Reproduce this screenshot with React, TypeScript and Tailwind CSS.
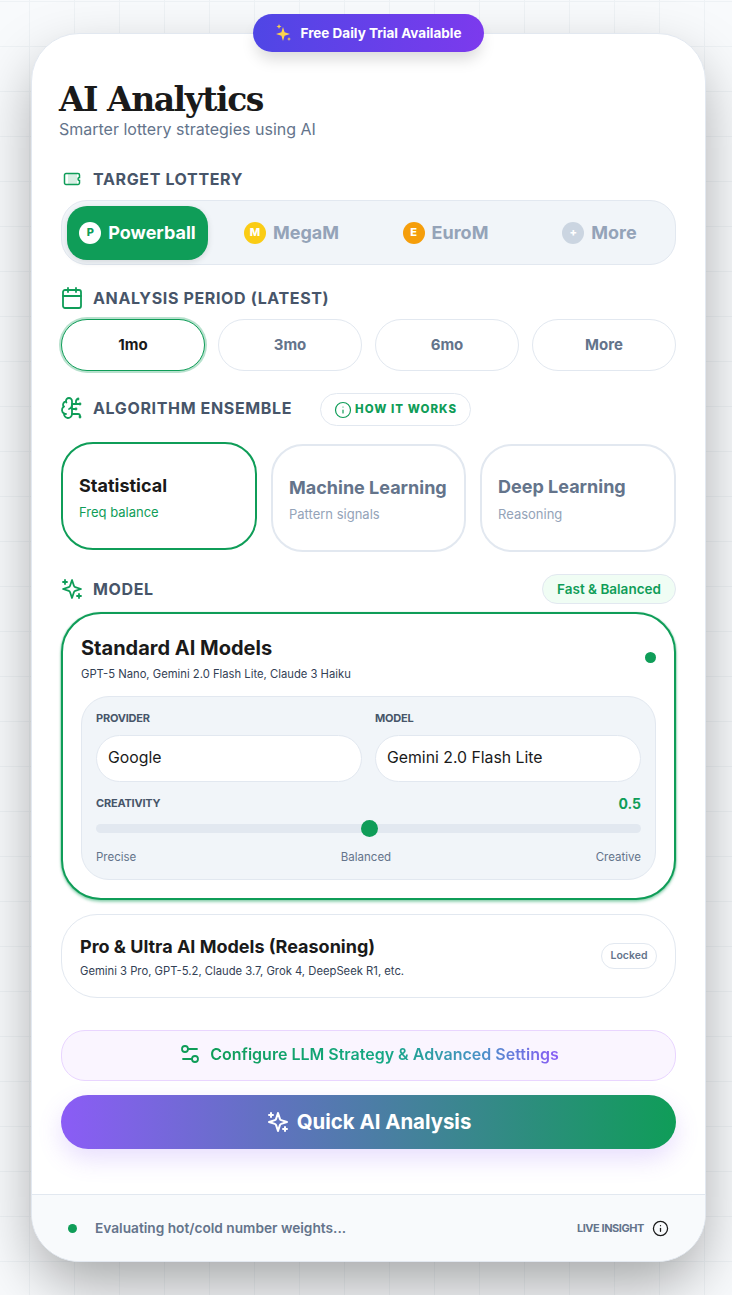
import { BrainCircuit, Calendar, Info, Settings2 } from 'lucide-react';

const LOTTERIES = [
  { label: 'MegaM', short: 'M', color: 'bg-[#facc15]' },
  { label: 'EuroM', short: 'E', color: 'bg-[#f59e0b]' },
  { label: 'More', short: '+', color: 'bg-[#cbd5e1]' },
];

function SectionTitle({ children }: { children: string }) {
  return <span className="text-[16px] font-bold tracking-[0.04em] text-[#475569]">{children}</span>;
}

function TicketIcon() {
  return (
    <svg width="18" height="14" viewBox="0 0 18 14" fill="none" className="text-[#0f9d58]">
      <rect x="5" y="2" width="9" height="10" fill="#0f9d58" fillOpacity="0.16" />
      <path
        d="M3 1.5h12a1.5 1.5 0 0 1 1.5 1.5v2.5a1.5 1.5 0 0 0 0 3V11a1.5 1.5 0 0 1-1.5 1.5H3A1.5 1.5 0 0 1 1.5 11V3A1.5 1.5 0 0 1 3 1.5Z"
        stroke="currentColor"
        strokeWidth="1.5"
      />
    </svg>
  );
}

function SparkleIcon({ className, strokeWidth }: { className?: string; strokeWidth: number }) {
  return (
    <svg width="24" height="24" viewBox="0 0 24 24" fill="none" stroke="currentColor" strokeWidth={strokeWidth} strokeLinecap="round" strokeLinejoin="round" className={className}>
      <path d="m12 3-1.912 5.813a2 2 0 0 1-1.275 1.275L3 12l5.813 1.912a2 2 0 0 1 1.275 1.275L12 21l1.912-5.813a2 2 0 0 1 1.275-1.275L21 12l-5.813-1.912a2 2 0 0 1-1.275-1.275L12 3Z" />
      <path d="M5 3v4" />
      <path d="M19 17v4" />
      <path d="M3 5h4" />
      <path d="M17 19h4" />
    </svg>
  );
}

function TrialStars() {
  return (
    <svg width="16" height="18" viewBox="0 0 16 18" fill="#fcd34d">
      <path d="M7 3 8.6 8.2 14 10l-5.4 1.8L7 17l-1.6-5.2L0 10l5.4-1.8Z" />
      <path d="M3 0l.7 1.8L5.5 2.5l-1.8.7L3 5l-.7-1.8L.5 2.5l1.8-.7Z" />
      <path d="M13 13l.6 1.4 1.4.6-1.4.6L13 17l-.6-1.4-1.4-.6 1.4-.6Z" />
    </svg>
  );
}

export default function App() {
  return (
    <div className="relative h-[1295px] w-full overflow-hidden bg-[#f8fafc] bg-[linear-gradient(to_right,#eef2f5_1px,transparent_1px),linear-gradient(to_bottom,#eef2f5_1px,transparent_1px)] bg-[size:45px_45px] bg-[position:29px_1px] pt-[33px] pl-[31px] font-['Inter',sans-serif]">
      {/* Card */}
      <div className="relative flex h-[1229px] w-[675px] flex-col rounded-[48px] border border-[#e2e8f0] bg-white shadow-[0_25px_60px_-5px_rgba(0,0,0,0.35)]">
        {/* Trial badge */}
        <div className="absolute -top-[20px] left-[221px] flex h-[38px] w-[231px] items-center justify-center gap-[9px] rounded-full bg-[linear-gradient(90deg,#4f46e5,#7c3aed)] text-[13.5px] font-bold text-white shadow-[0_10px_15px_-3px_rgba(0,0,0,0.15)]">
          <TrialStars />
          Free Daily Trial Available
        </div>

        <div className="flex flex-1 flex-col pr-[29px] pl-[29px]">
          {/* Header */}
          <div className="-ml-[2px] pt-[45px]">
            <h1 className="font-['DejaVu_Serif',serif] text-[33px] leading-[42px] font-bold tracking-[-0.045em] text-[#1a1a1a]">
              AI Analytics
            </h1>
            <p className="mt-[-2px] text-[16px] leading-[20px] text-[#64748b]">Smarter lottery strategies using AI</p>
          </div>

          {/* Target lottery */}
          <div className="mt-[30px] flex h-[20px] items-center gap-[12px] pl-[2px]">
            <TicketIcon />
            <SectionTitle>TARGET LOTTERY</SectionTitle>
          </div>
          <div className="mt-[11px] grid h-[65px] grid-cols-4 items-center gap-[13px] rounded-[26px] border border-[#e2e8f0] bg-[#f1f5f9] px-[5px]">
            <div className="flex h-[54px] items-center justify-center gap-[7px] rounded-[20px] bg-[#0f9d58] text-[18px] font-bold text-white shadow-[0_2px_6px_rgba(0,0,0,0.12)]">
              <span className="flex h-[22px] w-[22px] items-center justify-center rounded-full bg-white text-[11px] font-extrabold text-[#0f9d58]">
                P
              </span>
              Powerball
            </div>
            {LOTTERIES.map((l) => (
              <div key={l.label} className="flex items-center justify-center gap-[7px] text-[18px] font-bold text-[#94a3b8]">
                <span className={`flex h-[22px] w-[22px] items-center justify-center rounded-full text-[11px] font-extrabold text-white ${l.color}`}>
                  {l.short}
                </span>
                {l.label}
              </div>
            ))}
          </div>

          {/* Analysis period */}
          <div className="mt-[23px] -ml-[1px] flex h-[20px] items-center gap-[9px]">
            <Calendar size={24} strokeWidth={1.8} className="text-[#0f9d58]" />
            <SectionTitle>ANALYSIS PERIOD (LATEST)</SectionTitle>
          </div>
          <div className="mt-[11px] grid grid-cols-4 gap-[13px]">
            <div className="flex h-[52px] items-center justify-center rounded-[26px] border-[1.5px] border-[#0f9d58] bg-white text-[15px] font-bold text-[#1a1a1a] shadow-[0_0_0_2px_rgba(15,157,88,0.3)]">
              1mo
            </div>
            {['3mo', '6mo', 'More'].map((p) => (
              <div key={p} className="flex h-[52px] items-center justify-center rounded-[26px] border border-[#e2e8f0] bg-white text-[15px] font-bold text-[#64748b]">
                {p}
              </div>
            ))}
          </div>

          {/* Algorithm ensemble */}
          <div className="mt-[22px] flex h-[33px] items-center">
            <div className="mb-[3px] -ml-[1px] flex items-center gap-[9px]">
              <BrainCircuit size={24} strokeWidth={1.8} className="text-[#0f9d58]" />
              <SectionTitle>ALGORITHM ENSEMBLE</SectionTitle>
            </div>
            <div className="ml-[28px] flex h-[33px] w-[151px] items-center justify-center gap-[3px] rounded-full border border-[#e2e8f0] bg-white text-[11.5px] font-extrabold tracking-[0.09em] text-[#0f9d58]">
              <Info size={18} strokeWidth={1.6} />
              HOW IT WORKS
            </div>
          </div>
          <div className="mt-[18px] flex gap-[14px]">
            <div className="-mt-[2px] mb-[2px] h-[108px] w-[196px] rounded-[32px] border-2 border-[#0f9d58] bg-white pt-[29px] pl-[16px]">
              <div className="text-[18px] leading-[26px] font-bold text-[#1a1a1a]">Statistical</div>
              <div className="mt-[1px] text-[13px] leading-[24px] text-[#0f9d58]">Freq balance</div>
            </div>
            <div className="h-[108px] w-[195px] rounded-[32px] border-2 border-[#e2e8f0] bg-white pt-[29px] pl-[16px]">
              <div className="text-[18px] leading-[26px] font-bold text-[#64748b]">Machine Learning</div>
              <div className="mt-[1px] text-[13px] leading-[24px] text-[#94a3b8]">Pattern signals</div>
            </div>
            <div className="h-[108px] w-[196px] rounded-[32px] border-2 border-[#e2e8f0] bg-white pt-[28px] pl-[16px]">
              <div className="text-[18px] leading-[26px] font-bold text-[#64748b]">Deep Learning</div>
              <div className="mt-[2px] text-[13px] leading-[24px] text-[#94a3b8]">Reasoning</div>
            </div>
          </div>

          {/* Model */}
          <div className="mt-[22px] flex h-[30px] items-center">
            <div className="-ml-[1px] flex items-center gap-[9px]">
              <SparkleIcon strokeWidth={1.8} className="text-[#0f9d58]" />
              <SectionTitle>MODEL</SectionTitle>
            </div>
            <div className="ml-auto flex h-[30px] w-[134px] items-center justify-center rounded-full border border-[#e2e8f0] bg-[#f0fdf4] pt-[1px] text-[13.5px] font-semibold text-[#0f9d58]">
              Fast &amp; Balanced
            </div>
          </div>

          <div className="mt-[8px] h-[288px] rounded-[40px] border-2 border-[#0f9d58] bg-white px-[18px] shadow-[0_2px_3px_rgba(15,157,88,0.45),1px_0_1px_rgba(15,157,88,0.2),-1px_0_1px_rgba(15,157,88,0.2)]">
            <div className="relative h-[82px] pt-[20px]">
              <div className="text-[20px] leading-[28px] font-bold text-[#1a1a1a]">Standard AI Models</div>
              <div className="mt-[4px] text-[11.25px] leading-[16px] text-[#334155]">GPT-5 Nano, Gemini 2.0 Flash Lite, Claude 3 Haiku</div>
              <span className="absolute top-[38px] right-0 h-[11px] w-[11px] rounded-full bg-[#0f9d58]" />
            </div>
            <div className="h-[184px] rounded-[28px] border border-[#e2e8f0] bg-[#f1f5f9] px-[14px] pt-[14px]">
              <div className="grid grid-cols-2 gap-[13px]">
                <div>
                  <div className="text-[11px] leading-[14px] font-bold tracking-[-0.02em] text-[#475569]">PROVIDER</div>
                  <div className="mt-[10px] flex h-[47px] items-center rounded-[24px] border border-[#e2e8f0] bg-white pb-[2px] pl-[11px] text-[15.8px] text-[#1a1a1a]">
                    Google
                  </div>
                </div>
                <div>
                  <div className="text-[11px] leading-[14px] font-bold tracking-[-0.02em] text-[#475569]">MODEL</div>
                  <div className="mt-[10px] flex h-[47px] items-center rounded-[24px] border border-[#e2e8f0] bg-white pb-[2px] pl-[11px] text-[15.8px] text-[#1a1a1a]">
                    Gemini 2.0 Flash Lite
                  </div>
                </div>
              </div>
              <div className="mt-[14px] flex items-start justify-between">
                <span className="text-[11px] leading-[14px] font-bold tracking-[-0.02em] text-[#475569]">CREATIVITY</span>
                <span className="text-[14px] leading-[16px] font-bold text-[#0f9d58]">0.5</span>
              </div>
              <div className="relative mt-[12px] h-[9px] rounded-full bg-[#e2e8f0]">
                <span className="absolute top-[-4px] left-[265px] h-[17px] w-[17px] rounded-full bg-[#0f9d58]" />
              </div>
              <div className="mt-[16px] flex justify-between text-[11.5px] leading-[16px] text-[#64748b]">
                <span>Precise</span>
                <span>Balanced</span>
                <span>Creative</span>
              </div>
            </div>
          </div>

          {/* Locked tier */}
          <div className="mt-[14px] flex h-[84px] items-center justify-between rounded-[36px] border border-[#e2e8f0] bg-white pr-[18px] pl-[18px]">
            <div>
              <div className="text-[18px] leading-[26px] font-bold text-[#1a1a1a]">Pro &amp; Ultra AI Models (Reasoning)</div>
              <div className="mt-[3px] text-[11.25px] leading-[16px] text-[#334155]">Gemini 3 Pro, GPT-5.2, Claude 3.7, Grok 4, DeepSeek R1, etc.</div>
            </div>
            <div className="flex h-[26px] w-[56px] items-center justify-center rounded-full border border-[#e2e8f0] text-[10.5px] font-semibold text-[#64748b]">
              Locked
            </div>
          </div>

          {/* Actions */}
          <div className="mt-[32px] flex h-[51px] items-center justify-center gap-[8px] rounded-[24px] border border-[#e9d5ff] bg-[#faf5ff] pb-[3px]">
            <Settings2 size={24} strokeWidth={1.8} className="text-[#0f9d58]" />
            <span className="bg-[linear-gradient(90deg,#0f9d58_0%,#14a884_50%,#4a90c8_78%,#8b5cf6_100%)] bg-clip-text text-[16px] font-semibold text-transparent">
              Configure LLM Strategy &amp; Advanced Settings
            </span>
          </div>
          <div className="mt-[14px] flex h-[54px] items-center justify-center gap-[7px] rounded-full bg-[linear-gradient(90deg,#8b5cf6,#0f9d58)] text-[20.4px] font-bold text-white shadow-[0_10px_25px_rgba(139,92,246,0.2)]">
            <SparkleIcon strokeWidth={2} />
            Quick AI Analysis
          </div>
        </div>

        {/* Footer */}
        <div className="flex h-[67px] items-center rounded-b-[48px] border-t border-[#e2e8f0] bg-[#f8fafc] pr-[36px] pl-[36px]">
          <span className="h-[9px] w-[9px] rounded-full bg-[#0f9d58]" />
          <span className="ml-[18px] text-[13.7px] font-semibold text-[#64748b]">Evaluating hot/cold number weights...</span>
          <span className="ml-auto text-[11px] font-bold tracking-[-0.04em] text-[#64748b]">LIVE INSIGHT</span>
          <Info size={17} strokeWidth={1.8} className="ml-[8px] text-[#1a1a1a]" />
        </div>
      </div>
    </div>
  );
}
